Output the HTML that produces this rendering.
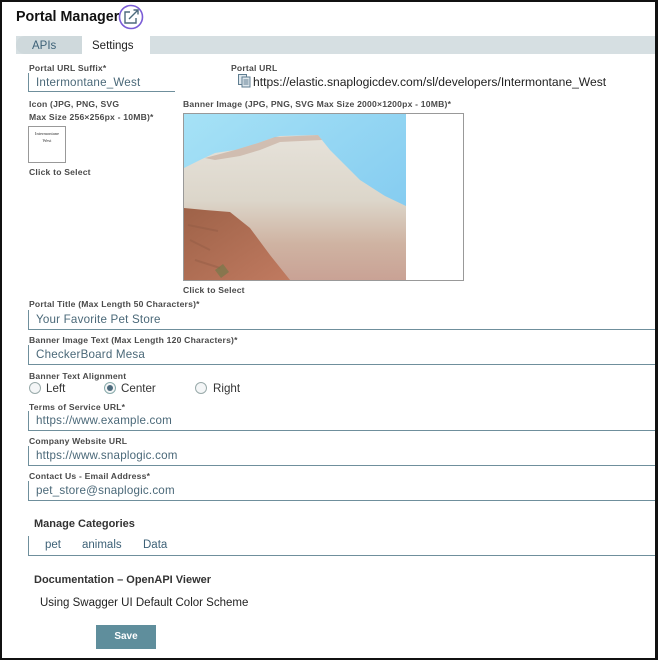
<!DOCTYPE html>
<html><head><meta charset="utf-8"><style>
*{margin:0;padding:0;box-sizing:border-box}
body{width:658px;height:660px;background:#fff;font-family:"Liberation Sans",sans-serif;position:relative;overflow:hidden}
.frame{position:absolute;left:0;top:0;width:658px;height:660px;border:2px solid #111;border-right-width:3px;border-bottom-width:2px}
.a{position:absolute;white-space:nowrap}
.lbl{font-size:8.6px;font-weight:bold;color:#4a4a4a;letter-spacing:.2px}
.inp{position:absolute;left:28px;right:2px;height:20px;border-left:1px solid #6f8f9c;border-bottom:1px solid #6f8f9c;font-size:11.6px;color:#4a6878;padding:3px 0 0 7px;letter-spacing:.2px}
.radio{position:absolute;width:12px;height:12px;border:1px solid #9aa;border-radius:50%;background:#f4f6f7}
</style></head><body>
<div class="a" style="left:16px;top:9px;font-size:14.3px;font-weight:bold;color:#111">Portal Manager</div>
<svg class="a" style="left:118px;top:4px" width="28" height="26" viewBox="0 0 28 26"><circle cx="13" cy="13" r="11.5" fill="none" stroke="#7a5cd6" stroke-width="1.6"/><path d="M12 8H7v11h11v-5" fill="none" stroke="#4d6a7c" stroke-width="1.4"/><path d="M11 15L20 6M15.5 6H20v4.5" fill="none" stroke="#4d6a7c" stroke-width="1.4"/></svg>
<div class="a" style="left:16px;top:36px;width:640px;height:18px;background:#d6dfe2"></div>
<div class="a" style="left:16px;top:36px;width:70px;height:18px;background:#cfd9dc;border-radius:9px 0 0 9px"></div>
<div class="a" style="left:32px;top:40px;font-size:11.5px;color:#3d6177">APIs</div>
<div class="a" style="left:82px;top:34px;width:68px;height:20px;background:#fff"></div>
<div class="a" style="left:92px;top:40px;font-size:11.5px;color:#222">Settings</div>

<div class="a lbl" style="left:29px;top:63px">Portal URL Suffix*</div>
<div class="inp" style="left:28px;right:auto;width:147px;top:73px;height:19px">Intermontane_West</div>
<div class="a lbl" style="left:231px;top:63px">Portal URL</div>
<svg class="a" style="left:238px;top:74px" width="13" height="14" viewBox="0 0 13 14"><rect x="0.5" y="0.5" width="8" height="10" fill="#dfe8ee" stroke="#5f7d90"/><rect x="4" y="3" width="8" height="10" fill="#dfe8ee" stroke="#5f7d90"/><path d="M5.5 6h5M5.5 8h5M5.5 10h5" stroke="#5f7d90"/></svg>
<div class="a" style="left:253px;top:75px;font-size:12.1px;color:#222">https://elastic.snaplogicdev.com/sl/developers/Intermontane_West</div>

<div class="a lbl" style="left:29px;top:99px">Icon (JPG, PNG, SVG</div>
<div class="a lbl" style="left:29px;top:112px">Max Size 256×256px - 10MB)*</div>
<div class="a" style="left:28px;top:126px;width:38px;height:37px;border:1px solid #999;font-family:'Liberation Serif',serif;font-size:4.5px;text-align:center;padding-top:3px;line-height:7px;color:#333">Intermontane<br>West</div>
<div class="a lbl" style="left:29px;top:167px">Click to Select</div>

<div class="a lbl" style="left:183px;top:99px">Banner Image (JPG, PNG, SVG Max Size 2000×1200px - 10MB)*</div>
<div class="a" style="left:183px;top:113px;width:281px;height:168px;border:1px solid #999"></div>
<svg class="a" style="left:184px;top:114px" width="222" height="166" viewBox="184 114 222 166">
<defs><linearGradient id="sky" x1="0" y1="0" x2="1" y2="1"><stop offset="0" stop-color="#a6e2f6"/><stop offset="1" stop-color="#7cc6ef"/></linearGradient>
<linearGradient id="rock" x1="0" y1="0" x2="0" y2="1"><stop offset="0" stop-color="#e6e2da"/><stop offset=".45" stop-color="#dcd6ca"/><stop offset=".75" stop-color="#cfb3a2"/><stop offset="1" stop-color="#c9a295"/></linearGradient>
<linearGradient id="red" x1="0" y1="0" x2="1" y2="1"><stop offset="0" stop-color="#9e6248"/><stop offset="1" stop-color="#c07a60"/></linearGradient></defs>
<rect x="184" y="114" width="222" height="166" fill="url(#sky)"/>
<path d="M184 168L200 160L215 153L235 150L258 143L272 138L280 136L318 135L330 150L345 165L360 180L385 196L406 206L406 280L184 280Z" fill="url(#rock)"/>
<path d="M205 158L235 150L258 143L275 137L318 135L322 140L280 142L260 150L240 156L215 160Z" fill="#b89482" opacity=".45"/>
<path d="M184 208L205 210L230 212L250 228L270 255L290 280L184 280Z" fill="url(#red)"/>
<path d="M190 240l20 10M195 260l25 8M188 225l30 6" stroke="#8f5a44" stroke-width="2" opacity=".4"/>
<path d="M215 270l8-6 6 8 -8 6z" fill="#6a7a48" opacity=".6"/>
</svg>
<div class="a lbl" style="left:183px;top:285px">Click to Select</div>

<div class="a lbl" style="left:29px;top:299px">Portal Title (Max Length 50 Characters)*</div>
<div class="inp" style="top:310px">Your Favorite Pet Store</div>
<div class="a lbl" style="left:29px;top:335px">Banner Image Text (Max Length 120 Characters)*</div>
<div class="inp" style="top:345px">CheckerBoard Mesa</div>
<div class="a lbl" style="left:29px;top:371px">Banner Text Alignment</div>
<div class="radio" style="left:29px;top:382px"></div>
<div class="a" style="left:46px;top:382px;font-size:11.6px;color:#333">Left</div>
<div class="radio" style="left:104px;top:382px;border-color:#8aa"><div style="position:absolute;left:2px;top:2px;width:6px;height:6px;border-radius:50%;background:#4d6a7c"></div></div>
<div class="a" style="left:121px;top:382px;font-size:11.6px;color:#333">Center</div>
<div class="radio" style="left:195px;top:382px"></div>
<div class="a" style="left:213px;top:382px;font-size:11.6px;color:#333">Right</div>
<div class="a lbl" style="left:29px;top:402px">Terms of Service URL*</div>
<div class="inp" style="top:411px">https://www.example.com</div>
<div class="a lbl" style="left:29px;top:436px">Company Website URL</div>
<div class="inp" style="top:446px">https://www.snaplogic.com</div>
<div class="a lbl" style="left:29px;top:471px">Contact Us - Email Address*</div>
<div class="inp" style="top:481px">pet_store@snaplogic.com</div>

<div class="a" style="left:34px;top:518px;font-size:11px;font-weight:bold;color:#333">Manage Categories</div>
<div class="a" style="left:28px;right:2px;top:536px;height:20px;border-left:1px solid #6f8f9c;border-bottom:1px solid #6f8f9c"></div>
<div class="a" style="left:45px;top:539px;font-size:11.5px;color:#3d6177">pet</div>
<div class="a" style="left:82px;top:539px;font-size:11.5px;color:#3d6177">animals</div>
<div class="a" style="left:143px;top:539px;font-size:11.5px;color:#3d6177">Data</div>
<div class="a" style="left:34px;top:574px;font-size:11px;font-weight:bold;color:#333">Documentation – OpenAPI Viewer</div>
<div class="a" style="left:40px;top:597px;font-size:11.5px;color:#222">Using Swagger UI Default Color Scheme</div>
<div class="a" style="left:96px;top:625px;width:60px;height:24px;background:#5f8e9c;color:#fff;font-size:10px;font-weight:bold;text-align:center;line-height:24px">Save</div>
<div class="frame"></div>
</body></html>
